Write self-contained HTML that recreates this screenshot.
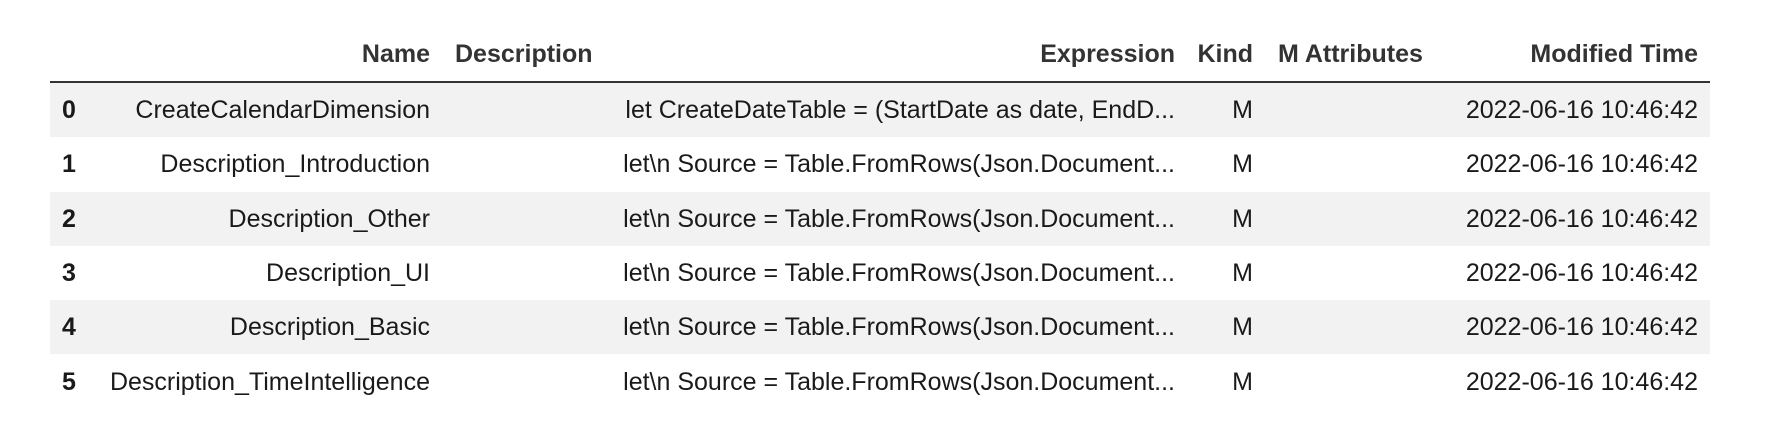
<!DOCTYPE html>
<html><head><style>
body{margin:0;width:1778px;height:438px;background:#fff;font-family:"Liberation Sans",sans-serif;color:#1a1a1a;overflow:hidden;position:relative}
.h{position:absolute;top:39px;font-weight:bold;font-size:25px;color:#333;white-space:nowrap;line-height:30px}
.line{position:absolute;left:50px;width:1660px;top:81px;height:2px;background:#333}
.row{position:absolute;left:50px;width:1660px;height:54.3px}
.g{background:#f2f2f2}
.c{position:absolute;top:0;line-height:54px;font-size:25px;white-space:nowrap}
.i{left:12px;font-weight:bold}
</style></head><body>
<div class="h" style="right:1348px">Name</div>
<div class="h" style="left:455px">Description</div>
<div class="h" style="right:603px">Expression</div>
<div class="h" style="right:525px">Kind</div>
<div class="h" style="left:1278px">M Attributes</div>
<div class="h" style="right:80px">Modified Time</div>
<div class="line"></div>

<div class="row g" style="top:83px"><span class="c i">0</span><span class="c" style="right:1280px">CreateCalendarDimension</span><span class="c" style="right:535px">let CreateDateTable = (StartDate as date, EndD...</span><span class="c" style="right:457px">M</span><span class="c" style="right:12px">2022-06-16 10:46:42</span></div>
<div class="row" style="top:137.3px"><span class="c i">1</span><span class="c" style="right:1280px">Description_Introduction</span><span class="c" style="right:535px">let\n Source = Table.FromRows(Json.Document...</span><span class="c" style="right:457px">M</span><span class="c" style="right:12px">2022-06-16 10:46:42</span></div>
<div class="row g" style="top:191.6px"><span class="c i">2</span><span class="c" style="right:1280px">Description_Other</span><span class="c" style="right:535px">let\n Source = Table.FromRows(Json.Document...</span><span class="c" style="right:457px">M</span><span class="c" style="right:12px">2022-06-16 10:46:42</span></div>
<div class="row" style="top:245.9px"><span class="c i">3</span><span class="c" style="right:1280px">Description_UI</span><span class="c" style="right:535px">let\n Source = Table.FromRows(Json.Document...</span><span class="c" style="right:457px">M</span><span class="c" style="right:12px">2022-06-16 10:46:42</span></div>
<div class="row g" style="top:300.2px"><span class="c i">4</span><span class="c" style="right:1280px">Description_Basic</span><span class="c" style="right:535px">let\n Source = Table.FromRows(Json.Document...</span><span class="c" style="right:457px">M</span><span class="c" style="right:12px">2022-06-16 10:46:42</span></div>
<div class="row" style="top:354.5px"><span class="c i">5</span><span class="c" style="right:1280px">Description_TimeIntelligence</span><span class="c" style="right:535px">let\n Source = Table.FromRows(Json.Document...</span><span class="c" style="right:457px">M</span><span class="c" style="right:12px">2022-06-16 10:46:42</span></div>
</body></html>
